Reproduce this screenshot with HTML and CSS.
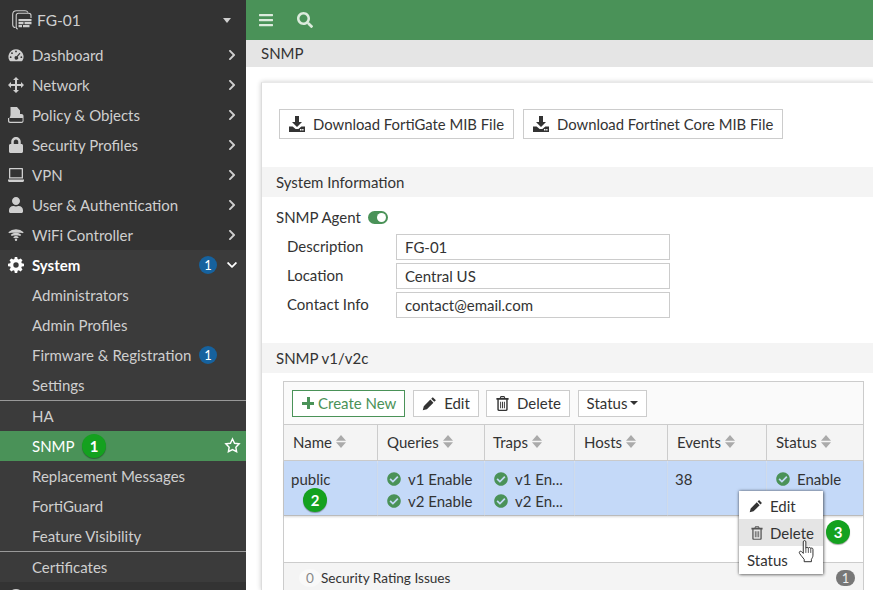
FILE: index.html
```html
<!DOCTYPE html>
<html lang="en">
<head>
<meta charset="utf-8">
<title>SNMP</title>
<link rel="stylesheet" href="styles.css">
</head>
<body>
<svg class="defs" width="0" height="0" aria-hidden="true">
  <symbol id="i-right" viewBox="0 0 320 512"><path d="M285.476 272.971L91.132 467.314c-9.373 9.373-24.569 9.373-33.941 0l-22.667-22.667c-9.357-9.357-9.375-24.522-.04-33.901L188.505 256 34.484 101.255c-9.335-9.379-9.317-24.544.04-33.901l22.667-22.667c9.373-9.373 24.569-9.373 33.941 0L285.475 239.03c9.373 9.372 9.373 24.568.001 33.941z"/></symbol>
  <symbol id="i-down" viewBox="0 0 448 512"><path d="M207.029 381.476L12.686 187.132c-9.373-9.373-9.373-24.569 0-33.941l22.667-22.667c9.357-9.357 24.522-9.375 33.901-.04L224 284.505l154.745-154.021c9.379-9.335 24.544-9.317 33.901.04l22.667 22.667c9.373 9.373 9.373 24.569 0 33.941L240.971 381.476c-9.373 9.372-24.569 9.372-33.942 0z"/></symbol>
  <symbol id="i-check" viewBox="0 0 512 512"><path d="M504 256c0 136.967-111.033 248-248 248S8 392.967 8 256 119.033 8 256 8s248 111.033 248 248zM227.314 387.314l184-184c6.248-6.248 6.248-16.379 0-22.627l-22.627-22.627c-6.248-6.249-16.379-6.249-22.628 0L216 308.118l-70.059-70.059c-6.248-6.248-16.379-6.248-22.628 0l-22.627 22.627c-6.248 6.248-6.248 16.379 0 22.627l104 104c6.249 6.249 16.379 6.249 22.628.001z"/></symbol>
  <symbol id="i-sort" viewBox="0 0 10 13"><path d="M5 0l5 5.700H0zM5 13L0 7.300h10z"/></symbol>
  <symbol id="i-pencil" viewBox="0 0 16 16"><path d="M11.500 1.200l3.300 3.300-1.700 1.700-3.300-3.300zM8.900 3.800l3.300 3.300-7 7L.8 15.200l1.100-4.400z"/></symbol>
  <symbol id="i-trash" viewBox="0 0 14 16"><path fill-rule="evenodd" d="M5 0h4l1 2h3.500v2h-1v10.500c0 .9-.6 1.500-1.500 1.500H3c-.9 0-1.500-.6-1.500-1.500V4h-1V2H4zM5.600 1.200L5.200 2h3.600l-.4-.8zM3 4v10.200c0 .3.2.4.4.4h7.200c.2 0 .4-.1.4-.4V4zM4.500 6h1v7h-1zM6.500 6h1v7h-1zM8.500 6h1v7h-1z"/></symbol>
  <symbol id="i-dl" viewBox="0 0 16 16"><path fill-rule="evenodd" d="M6 0h4v6h3L8 11 3 6h3zM0 10.500h3.600L6.600 13h2.800l3-2.500H16V16H0zM11 13v1.500h1.500V13zM13.200 13v1.500h1.300V13z"/></symbol>
</svg>

<div class="app">
  <aside class="sidebar">
    <div class="device">
      <svg class="device-icon" viewBox="0 0 20 20" fill="none" stroke="currentColor" stroke-width="1.100"><path d="M3.500 17.500c-1.500 0-2.800-1-2.800-2.800V4.500C.7 2.300 2.300.7 4.500.7h8.500c1.500 0 2.500.8 3 1.800"/><path d="M6 19c-1 0-1.800-.7-1.800-1.800V5.500c0-1.200.8-2.200 2.200-2.200h10.400c1.200 0 2.200.9 2.200 2.200v2.500"/><path fill="currentColor" stroke="none" d="M6.500 9h13v2.200h-13zM6.500 12h5v2.200h-5zM12.500 12h7v2.200h-7zM6.500 15h3.500v2.200H6.500zM11 15h6.500v2.200H11z"/></svg>
      <span class="device-name">FG-01</span>
      <span class="caret"></span>
    </div>
    <nav class="menu">
      <a class="item"><svg class="ico" viewBox="0 0 18 16"><path fill-rule="evenodd" d="M9 1.500a8.500 8.500 0 0 1 7.300 12.800c-.2.400-.6.700-1.100.7H2.800c-.5 0-.9-.3-1.100-.7A8.500 8.500 0 0 1 9 1.500zM9 3a1 1 0 1 0 0 2 1 1 0 0 0 0-2zM4.500 5a1 1 0 1 0 0 2 1 1 0 0 0 0-2zM13 5.500L9.700 9.300a2 2 0 1 0 1.200.7l3.100-3.700zM3 9.500a1 1 0 1 0 0 2 1 1 0 0 0 0-2zM15 9.500a1 1 0 1 0 0 2 1 1 0 0 0 0-2z"/></svg><span class="label">Dashboard</span><svg class="chev"><use href="#i-right"/></svg></a>
      <a class="item"><svg class="ico" viewBox="0 0 16 16"><path d="M8 0l3 3H9v4h4V5l3 3-3 3V9H9v4h2l-3 3-3-3h2V9H3v2L0 8l3-3v2h4V3H5z"/></svg><span class="label">Network</span><svg class="chev"><use href="#i-right"/></svg></a>
      <a class="item"><svg class="ico" viewBox="0 0 16 16"><path d="M2.500 0H9l3 3.500V7h1.500c1.200 0 2 .8 2 2v5c0 1.200-.8 2-2 2H2c-1.200 0-2-.8-2-2v-3h1.200v2.800c0 .6.300 1 .9 1h11.600c.6 0 .9-.4.9-1V11H1.500c.5-1 1-2 1-3.500z"/></svg><span class="label">Policy &amp; Objects</span><svg class="chev"><use href="#i-right"/></svg></a>
      <a class="item"><svg class="ico" viewBox="0 0 448 512"><path d="M400 224h-24v-72C376 68.200 307.800 0 224 0S72 68.200 72 152v72H48c-26.500 0-48 21.500-48 48v192c0 26.500 21.500 48 48 48h352c26.500 0 48-21.500 48-48V272c0-26.500-21.500-48-48-48zm-104 0H152v-72c0-39.700 32.300-72 72-72s72 32.300 72 72v72z"/></svg><span class="label">Security Profiles</span><svg class="chev"><use href="#i-right"/></svg></a>
      <a class="item"><svg class="ico" viewBox="0 0 16 14"><path fill-rule="evenodd" d="M2 0h12c.6 0 1 .4 1 1v9.500H1V1c0-.6.400-1 1-1zM2.300 1.300v7.900h11.400V1.300zM0 11.500h16v1c0 .8-.6 1.500-1.500 1.500h-13C.6 14 0 13.300 0 12.500z"/></svg><span class="label">VPN</span><svg class="chev"><use href="#i-right"/></svg></a>
      <a class="item"><svg class="ico" viewBox="0 0 448 512"><path d="M224 256c70.700 0 128-57.300 128-128S294.700 0 224 0 96 57.300 96 128s57.300 128 128 128zm89.600 32h-16.700c-22.200 10.200-46.900 16-72.900 16s-50.600-5.800-72.900-16h-16.700C60.200 288 0 348.200 0 422.400V464c0 26.500 21.500 48 48 48h352c26.500 0 48-21.500 48-48v-41.600c0-74.200-60.200-134.400-134.400-134.400z"/></svg><span class="label">User &amp; Authentication</span><svg class="chev"><use href="#i-right"/></svg></a>
      <a class="item"><svg class="ico" viewBox="0 0 16 12" fill="none" stroke="currentColor" stroke-width="1.500"><path d="M.8 3.800a10.500 10.500 0 0 1 14.400 0M3.300 6.400a7 7 0 0 1 9.400 0M5.700 8.800a3.500 3.500 0 0 1 4.600 0"/><circle cx="8" cy="10.800" r="1.200" fill="currentColor" stroke="none"/></svg><span class="label">WiFi Controller</span><svg class="chev"><use href="#i-right"/></svg></a>
      <div class="group">
        <a class="item item-system"><svg class="ico" viewBox="0 0 16 16"><path fill-rule="evenodd" d="M6.800 0h2.400l.4 2.100 1.200.5L12.600 1.400l1.900 1.900-1.200 1.800.5 1.200 2.200.5v2.400l-2.200.4-.5 1.200 1.200 1.800-1.900 1.900-1.800-1.200-1.200.5-.4 2.100H6.800l-.4-2.100-1.200-.5-1.800 1.200-1.900-1.900 1.200-1.800-.5-1.200L0 9.200V6.800l2.200-.5.500-1.200-1.200-1.800 1.900-1.900 1.800 1.200 1.200-.5zM8 5.300a2.700 2.700 0 1 0 0 5.400 2.700 2.700 0 0 0 0-5.400z"/></svg><span class="label">System</span><span class="count">1</span><svg class="chev-down"><use href="#i-down"/></svg></a>
        <a class="sub">Administrators</a>
        <a class="sub">Admin Profiles</a>
        <a class="sub">Firmware &amp; Registration<span class="count count-inline">1</span></a>
        <a class="sub">Settings</a>
        <a class="sub sub-rule">HA</a>
        <a class="sub sub-active">SNMP<svg class="star" viewBox="0 0 24 24" fill="none" stroke="currentColor" stroke-width="2"><path d="M12 2.800l2.900 6 6.500.9-4.700 4.600 1.100 6.500-5.800-3.100-5.800 3.100 1.100-6.500L2.600 9.700l6.500-.9z"/></svg></a>
        <a class="sub">Replacement Messages</a>
        <a class="sub">FortiGuard</a>
        <a class="sub">Feature Visibility</a>
        <a class="sub sub-rule">Certificates</a>
      </div>
      <a class="item"><svg class="ico" viewBox="0 0 16 16"><circle cx="8" cy="8" r="8"/></svg></a>
    </nav>
  </aside>

  <main class="main">
    <header class="topbar">
      <svg class="top-ico top-bars" viewBox="0 0 448 512"><path d="M16 132h416c8.837 0 16-7.163 16-16V76c0-8.837-7.163-16-16-16H16C7.163 60 0 67.163 0 76v40c0 8.837 7.163 16 16 16zm0 160h416c8.837 0 16-7.163 16-16v-40c0-8.837-7.163-16-16-16H16c-8.837 0-16 7.163-16 16v40c0 8.837 7.163 16 16 16zm0 160h416c8.837 0 16-7.163 16-16v-40c0-8.837-7.163-16-16-16H16c-8.837 0-16 7.163-16 16v40c0 8.837 7.163 16 16 16z"/></svg>
      <svg class="top-ico top-search" viewBox="0 0 512 512"><path d="M505 442.700L405.300 343c-4.500-4.500-10.600-7-17-7H372c27.600-35.300 44-79.700 44-128C416 93.100 322.900 0 208 0S0 93.100 0 208s93.100 208 208 208c48.300 0 92.700-16.400 128-44v16.300c0 6.400 2.500 12.500 7 17l99.700 99.700c9.400 9.400 24.600 9.400 33.900 0l28.300-28.300c9.400-9.400 9.400-24.600.1-34zM208 336c-70.700 0-128-57.200-128-128 0-70.700 57.200-128 128-128 70.700 0 128 57.200 128 128 0 70.700-57.200 128-128 128z"/></svg>
    </header>
    <div class="titlebar">SNMP</div>
    <section class="card">
      <div class="downloads">
        <button class="btn btn-fg"><svg class="dl-ico"><use href="#i-dl"/></svg>Download FortiGate MIB File</button>
        <button class="btn btn-core"><svg class="dl-ico"><use href="#i-dl"/></svg>Download Fortinet Core MIB File</button>
      </div>
      <h2 class="bar">System Information</h2>
      <div class="agent"><span>SNMP Agent</span><span class="toggle"></span></div>
      <div class="form">
        <label class="form-label">Description</label><div class="input">FG-01</div>
        <label class="form-label">Location</label><div class="input">Central US</div>
        <label class="form-label">Contact Info</label><div class="input">contact@email.com</div>
      </div>
      <h2 class="bar bar-snmp">SNMP v1/v2c</h2>
      <div class="tbox">
        <div class="toolbar">
          <button class="tbtn tbtn-create"><span class="plus"></span>Create New</button>
          <button class="tbtn tbtn-edit"><svg class="tb-ico"><use href="#i-pencil"/></svg>Edit</button>
          <button class="tbtn tbtn-del"><svg class="tb-ico"><use href="#i-trash"/></svg>Delete</button>
          <button class="tbtn tbtn-status">Status<span class="caret-dark"></span></button>
        </div>
        <div class="grid">
          <div class="th">Name<svg class="sort"><use href="#i-sort"/></svg></div>
          <div class="th">Queries<svg class="sort"><use href="#i-sort"/></svg></div>
          <div class="th th-traps">Traps<svg class="sort"><use href="#i-sort"/></svg></div>
          <div class="th">Hosts<svg class="sort"><use href="#i-sort"/></svg></div>
          <div class="th">Events<svg class="sort"><use href="#i-sort"/></svg></div>
          <div class="th">Status<svg class="sort"><use href="#i-sort"/></svg></div>
          <div class="td">public</div>
          <div class="td"><div class="st"><svg class="ok"><use href="#i-check"/></svg>v1 Enable</div><div class="st"><svg class="ok"><use href="#i-check"/></svg>v2 Enable</div></div>
          <div class="td"><div class="st"><svg class="ok"><use href="#i-check"/></svg>v1 En...</div><div class="st"><svg class="ok"><use href="#i-check"/></svg>v2 En...</div></div>
          <div class="td"></div>
          <div class="td">38</div>
          <div class="td"><div class="st"><svg class="ok"><use href="#i-check"/></svg>Enable</div></div>
        </div>
        <div class="empty"></div>
        <div class="tfoot"><span class="zero">0</span><span>Security Rating Issues</span><span class="foot-count">1</span></div>
      </div>
    </section>
  </main>
</div>

<div class="ctx">
  <div class="ctx-row ctx-first"><svg class="tb-ico ctx-ico"><use href="#i-pencil"/></svg>Edit</div>
  <div class="ctx-row ctx-hover"><svg class="tb-ico ctx-ico ctx-trash"><use href="#i-trash"/></svg>Delete</div>
  <div class="ctx-row ctx-plain">Status</div>
</div>
<svg class="hand" viewBox="0 0 18 26"><path fill="#fff" stroke="#222" stroke-width="1" stroke-linejoin="round" d="M5.500 2c0-1.800 2.800-1.800 2.800 0v7c.2-1.500 2.600-1.500 2.700 0 .2-1.300 2.500-1.300 2.600.3.300-1 2.400-.8 2.400.8v6.400c0 2-1 3-1.700 4.500v2.500H6.500V21C5 19 3.500 17.500 1.500 14.500.5 13 2 11.500 3.500 12.500l2 2z"/><path fill="none" stroke="#222" stroke-width=".8" d="M8.300 9v5M11 9v5M13.600 9.500V14"/></svg>
<span class="step step-1">1</span>
<span class="step step-2">2</span>
<span class="step step-3">3</span>
</body>
</html>
```
FILE: styles.css
```css
* { box-sizing: border-box; }
html, body { margin: 0; height: 590px; overflow: hidden; }
body { position: relative; font: 15px/20px Lato, "Open Sans", sans-serif; color: #333; background: #fff; }
.defs { position: absolute; }
.app { display: flex; height: 590px; }

.sidebar { width: 246px; flex: none; background: #333; color: #cfcfcf; overflow: hidden; }
.device { height: 40px; display: flex; align-items: center; padding: 0 15px 0 12px; gap: 5px; font-size: 15.5px; }
.device-icon { width: 20px; height: 20px; }
.device-name { flex: 1; }
.caret { border: 4px solid transparent; border-top: 5px solid #cfcfcf; border-bottom: 0; }
.menu { display: block; }
.item { height: 30px; display: flex; align-items: center; padding-left: 8px; }
.ico { width: 16px; height: 16px; fill: currentColor; flex: none; margin-right: 8px; }
.label { flex: 1; }
.chev { width: 8px; height: 12px; fill: #cfcfcf; margin-right: 10px; }
.group { background: #3b3b3b; }
.item-system { color: #fff; font-weight: 700; }
.chev-down { width: 10px; height: 12px; fill: #fff; margin-right: 9px; margin-left: 10px; }
.count { width: 18px; height: 18px; border-radius: 50%; background: #16629e; color: #fff; font-size: 13px; font-weight: 400; line-height: 18px; text-align: center; flex: none; }
.sub { height: 30px; display: flex; align-items: center; padding-left: 32px; position: relative; }
.count-inline { position: absolute; left: 199px; top: 6px; }
.sub-rule { height: 31px; border-top: 1px solid #999; }
.sub-active { background: #4a9258; color: #fff; }
.star { position: absolute; left: 224px; top: 6px; width: 17px; height: 17px; color: #fff; }

.main { flex: 1; min-width: 0; display: flex; flex-direction: column; overflow: hidden; }
.topbar { height: 40px; flex: none; background: #4a9258; display: flex; align-items: center; color: #dcebdd; padding-left: 13px; }
.top-ico { fill: currentColor; flex: none; }
.top-bars { width: 14px; height: 16px; }
.top-search { width: 16px; height: 16px; margin-left: 24px; }
.titlebar { height: 27px; flex: none; background: #e5e5e5; padding-left: 15px; line-height: 27px; }

.card { flex: 1; margin: 15px 0 0 15px; border-left: 1px solid #ddd; border-top: 1px solid #e8e8e8; box-shadow: 0 0 5px rgba(0,0,0,.2); background: #fff; padding-top: 26px; }
.downloads { display: flex; gap: 9px; padding-left: 17px; }
.btn { height: 30px; background: #fff; border: 1px solid #ccc; font: inherit; font-size: 14.85px; color: #333; display: flex; align-items: center; padding: 0 0 0 9px; white-space: nowrap; }
.btn-fg { width: 235px; }
.btn-core { width: 260px; }
.dl-ico { width: 16px; height: 16px; fill: #333; margin-right: 8px; }
.bar { margin: 28px 0 0; height: 30px; background: #f4f4f4; padding-left: 14px; font: inherit; line-height: 30px; }
.agent { display: flex; align-items: center; gap: 7px; padding-left: 14px; margin-top: 10px; height: 20px; }
.toggle { width: 20px; height: 13px; border-radius: 7px; background: #4a9258; position: relative; }
.toggle::after { content: ""; position: absolute; right: 2px; top: 2px; width: 9px; height: 9px; border-radius: 50%; background: #fff; }
.form { display: grid; grid-template-columns: 109px 274px; grid-auto-rows: 26px; row-gap: 3px; padding-left: 25px; margin-top: 7px; }
.form-label { line-height: 24px; }
.input { border: 1px solid #ccc; padding-left: 8px; line-height: 25px; }
.bar-snmp { margin-top: 25px; }

.tbox { margin: 8px 9px 0 21px; width: 581px; border: 1px solid #ccc; border-bottom: 0; height: 209px; display: flex; flex-direction: column; }
.toolbar { height: 42px; flex: none; background: #fafafa; display: flex; align-items: center; padding: 0 0 0 8px; gap: 8px; }
.tbtn { height: 27px; background: #fff; border: 1px solid #ccc; font: inherit; color: #333; display: flex; align-items: center; justify-content: center; padding: 0; white-space: nowrap; }
.tbtn-create { width: 113px; border-color: #4a9258; color: #4a9258; justify-content: flex-start; padding-left: 9px; }
.tbtn-edit { width: 66px; margin-right: -1px; }
.tbtn-del { width: 84px; }
.tbtn-status { width: 69px; }
.plus { width: 12px; height: 12px; margin-right: 4px; background: linear-gradient(#4a9258,#4a9258) center/3px 12px no-repeat, linear-gradient(#4a9258,#4a9258) center/12px 3px no-repeat; }
.tb-ico { width: 15px; height: 15px; fill: #333; margin-right: 7px; }
.caret-dark { border: 4px solid transparent; border-top: 4px solid #333; border-bottom: 0; margin-left: 3px; }
.grid { display: grid; grid-template-columns: 94px 107px 90px 93px 99px 1fr; grid-template-rows: 37px 55px; flex: none; }
.th { background: #f4f4f4; border-top: 1px solid #ccc; border-bottom: 1px solid #ccc; border-right: 1px solid #ccc; padding: 0 0 2px 9px; display: flex; align-items: center; }
.th-traps { padding-left: 8px; }
.th:nth-child(6) { border-right: 0; }
.sort { width: 10px; height: 13px; fill: #aaa; margin-left: 4px; }
.td { background: #c4d9f8; border-right: 1px solid #dbe6f6; padding: 8px 0 0 9px; line-height: 20px; border-bottom: 1px solid #bbb; box-shadow: 0 1px 2px rgba(0,0,0,.15); }
.td:nth-child(7) { padding-left: 7px; }
.td:nth-child(11) { padding-left: 7px; }
.td:nth-child(12) { border-right: 0; }
.st { height: 22px; display: flex; align-items: flex-start; white-space: nowrap; }
.ok { width: 14px; height: 14px; fill: #4a9258; margin: 3px 7px 0 0; flex: none; }
.empty { flex: 1; }
.tfoot { height: 28px; flex: none; background: #f4f4f4; border-top: 1px solid #ccc; display: flex; align-items: center; font-size: 13.6px; padding: 2px 8px 0 15px; }
.zero { color: #888; width: 22px; height: 18px; line-height: 18px; text-align: center; background: #f9f9f9; border-radius: 50%; }
.foot-count { margin-left: auto; width: 19px; height: 16px; border-radius: 8px; background: #777; color: #eee; font-size: 13px; line-height: 16px; text-align: center; }

.ctx { position: absolute; left: 739px; top: 491px; width: 84px; height: 83px; background: #fff; box-shadow: 0 0 3px rgba(0,0,0,.55), 1px 1px 3px rgba(0,0,0,.3); z-index: 3; }
.ctx-row { height: 27px; display: flex; align-items: center; padding-left: 10px; }
.ctx-first { height: 28px; padding-top: 2px; }
.ctx-hover { background: #e5e5e5; padding-left: 12px; }
.ctx-plain { padding-left: 8px; }
.ctx-ico { width: 14px; height: 14px; margin-right: 7px; }
.ctx-trash { fill: #555; margin-right: 7px; width: 12px; }
.hand { position: absolute; left: 798px; top: 540px; width: 17px; height: 24px; z-index: 4; }
.step { position: absolute; width: 24px; height: 24px; border-radius: 50%; background: #14a11f; color: #fff; text-align: center; line-height: 24px; font-size: 15px; font-weight: 700; box-shadow: 0 1px 1px rgba(0,0,0,.35); z-index: 5; }
.step-1 { left: 82px; top: 434px; }
.step-2 { left: 303px; top: 488px; }
.step-3 { left: 826px; top: 520px; }
```
